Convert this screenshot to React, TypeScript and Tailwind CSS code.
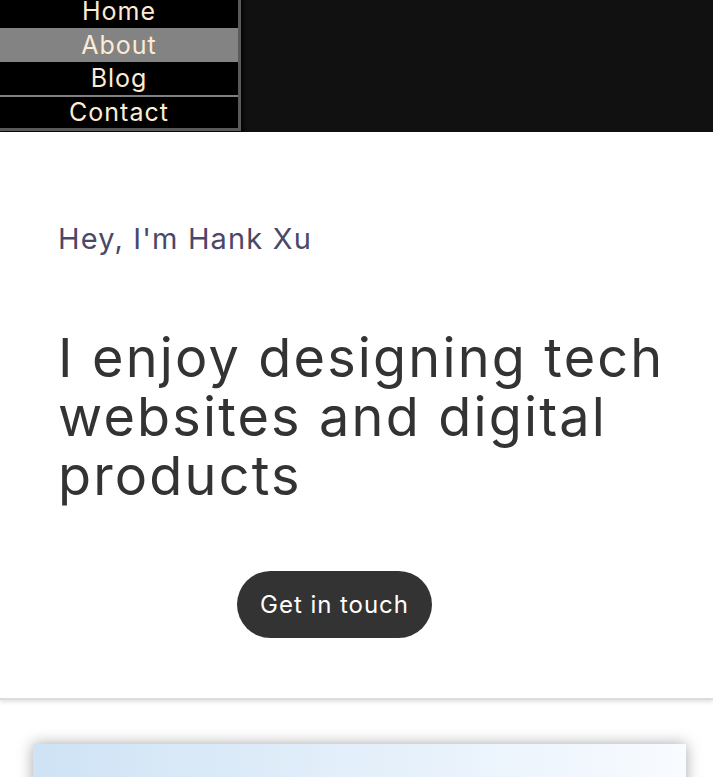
import React from "react";

const links = ["Home", "About", "Blog", "Contact"];

function Nav() {
  return (
    <div className="h-[132px] bg-[#111111] overflow-hidden">
      <ul className="w-[241px] -mt-[6px] bg-black border-r-[3px] border-b-[3px] border-[#5a5a5a] shadow-[3px_2px_3px_rgba(0,0,0,0.6)]">
        {links.map((l, i) => (
          <li
            key={l}
            className={
              "flex items-center justify-center text-[25px] leading-none tracking-[0.04em] text-[#fdebd3] " +
              (l === "About" ? "bg-[#838383] " : "") +
              (i === 3 ? "border-t-2 border-[#808080] h-[33px]" : i === 2 ? "h-[33px]" : "h-[34px]")
            }
          >
            {l}
          </li>
        ))}
      </ul>
    </div>
  );
}

export default function App() {
  return (
    <div className="min-h-screen bg-white font-['Inter',sans-serif] overflow-hidden">
      <Nav />
      <section className="pl-[58px] pr-[20px] pt-[89px] pb-[60px] border-b-2 border-[#dcdcdc] shadow-[0_2px_4px_rgba(0,0,0,0.12)]">
        <p className="text-[29px] leading-[36px] tracking-[0.04em] text-[#4a4868]">Hey, I'm Hank Xu</p>
        <h1 className="mt-[71px] text-[54px] leading-[59px] tracking-[0.04em] text-[#333333]">
          I enjoy designing tech websites and digital products
        </h1>
        <div className="mt-[66px] ml-[179px]">
          <button className="h-[67px] w-[195px] rounded-full bg-[#333333] text-white text-[24px] tracking-[0.04em]">
            Get in touch
          </button>
        </div>
      </section>
      <div className="pl-[33px] pr-[27px] pt-[44px]">
        <div className="h-[200px] bg-gradient-to-r from-[#cfe3f5] to-[#f8fbff] shadow-[0_0_14px_rgba(0,0,0,0.35)]" />
      </div>
    </div>
  );
}
